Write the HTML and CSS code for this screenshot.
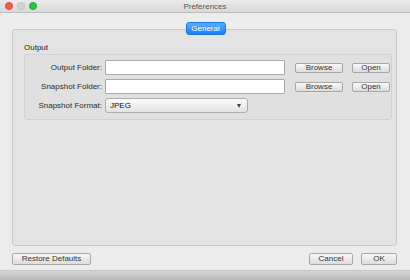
FILE: index.html
```html
<html>
<head>
    <title>Preferences</title>
    <link rel="stylesheet" href="styles.css">
</head>
<body>
    <div class="window">
        <div class="titlebar">
            <div class="lights">
                <span class="light light--close"></span>
                <span class="light light--min"></span>
                <span class="light light--max"></span>
            </div>
            <div class="title">Preferences</div>
        </div>

        <div class="content">
            <div class="tabs">
                <span class="tab">General</span>
            </div>
            <div class="panel">
                <div class="group-title">Output</div>
                <div class="group">
                    <div class="row">
                        <label class="label">Output Folder:</label>
                        <input class="field" type="text">
                        <button class="btn btn--browse">Browse</button>
                        <button class="btn btn--open">Open</button>
                    </div>
                    <div class="row">
                        <label class="label">Snapshot Folder:</label>
                        <input class="field" type="text">
                        <button class="btn btn--browse">Browse</button>
                        <button class="btn btn--open">Open</button>
                    </div>
                    <div class="row">
                        <label class="label">Snapshot Format:</label>
                        <div class="select">
                            <span>JPEG</span>
                            <span class="caret"></span>
                        </div>
                    </div>
                </div>
            </div>

            <div class="footer">
                <button class="btn btn--restore">Restore Defaults</button>
                <div class="footer__right">
                    <button class="btn btn--cancel">Cancel</button>
                    <button class="btn btn--ok">OK</button>
                </div>
            </div>
        </div>
        <div class="bottom-edge"></div>
    </div>
</body>
</html>
```

FILE: styles.css
```css
* {
    box-sizing: border-box;
    margin: 0;
    padding: 0;
}
body {
    width: 410px;
    height: 280px;
    overflow: hidden;
    background: #ececec;
    font: 8px/1 "Liberation Sans", Arial, sans-serif;
    color: #222;
}
.window {
    height: 280px;
    display: flex;
    flex-direction: column;
}

/* Title bar */
.titlebar {
    height: 13px;
    background: linear-gradient(#ebebeb, #d8d8d8);
    border-bottom: 1px solid #bdbdbd;
    display: flex;
    align-items: center;
    justify-content: center;
}
.lights {
    position: absolute;
    left: 5px;
    top: 2px;
    display: flex;
    gap: 4px;
}
.light {
    width: 8px;
    height: 8px;
    border-radius: 50%;
}
.light--close { background: #f25b56; border: 1px solid #dd4a45; }
.light--min { background: #d3d3d3; border: 1px solid #c4c4c4; }
.light--max { background: #2cc33f; border: 1px solid #1eaa31; }
.title {
    color: #555;
    font-size: 8px;
    padding-top: 1px;
}

/* Content */
.content {
    flex: 1;
    padding: 9px 13px 0 12px;
    display: flex;
    flex-direction: column;
}
.tabs {
    display: flex;
    justify-content: center;
    height: 13px;
    margin-bottom: -6px;
    position: relative;
    z-index: 1;
    padding-left: 2px;
}
.tab {
    width: 40px;
    height: 13px;
    border-radius: 3px;
    background: linear-gradient(#5aaefc, #1b7ff2);
    border: 1px solid #1a78e6;
    color: #fff;
    text-align: center;
    line-height: 11px;
    font-size: 8px;
}
.panel {
    height: 217px;
    background: #e3e3e3;
    border: 1px solid #c9c9c9;
    border-radius: 3px;
    padding: 14px 4px 0 11px;
}
.group-title {
    font-size: 8px;
    margin-bottom: 2px;
    color: #222;
}
.group {
    height: 66px;
    border: 1px solid #d2d2d2;
    border-radius: 3px;
    background: #e0e0e0;
    padding: 5px 0 0 0;
    display: flex;
    flex-direction: column;
    gap: 4px;
}
.row {
    display: flex;
    align-items: center;
    height: 15px;
}
.label {
    width: 80px;
    text-align: right;
    padding-right: 3px;
    color: #2a2a2a;
}
.field {
    width: 180px;
    height: 15px;
    border: 1px solid #a9a9a9;
    border-radius: 1px;
    background: #fff;
    margin-right: 10px;
}
.btn {
    height: 10px;
    font: 8px/1 "Liberation Sans", Arial, sans-serif;
    color: #333;
    background: linear-gradient(#f9f9f9, #dcdcdc);
    border: 1px solid #a7a7a7;
    border-radius: 2px;
    display: flex;
    align-items: center;
    justify-content: center;
}
.btn--browse { width: 48px; margin-right: 9px; }
.btn--open { width: 38px; }
.select {
    width: 143px;
    height: 15px;
    border: 1px solid #adadad;
    border-radius: 3px;
    background: linear-gradient(#fbfbfb, #e2e2e2);
    display: flex;
    align-items: center;
    justify-content: space-between;
    padding: 0 6px 0 4px;
    color: #111;
}
.caret {
    width: 0;
    height: 0;
    border-left: 2.5px solid transparent;
    border-right: 2.5px solid transparent;
    border-top: 4px solid #444;
}

/* Footer */
.footer {
    display: flex;
    justify-content: space-between;
    align-items: center;
    margin-top: 7px;
}
.footer__right {
    display: flex;
    gap: 8px;
}
.btn--restore { width: 79px; height: 12px; }
.btn--cancel { width: 44px; height: 12px; }
.btn--ok { width: 36px; height: 12px; }

.bottom-edge {
    height: 10px;
    background: linear-gradient(#d6d6d6, #b9b9b9);
    border-top: 1px solid #c8c8c8;
}
```
